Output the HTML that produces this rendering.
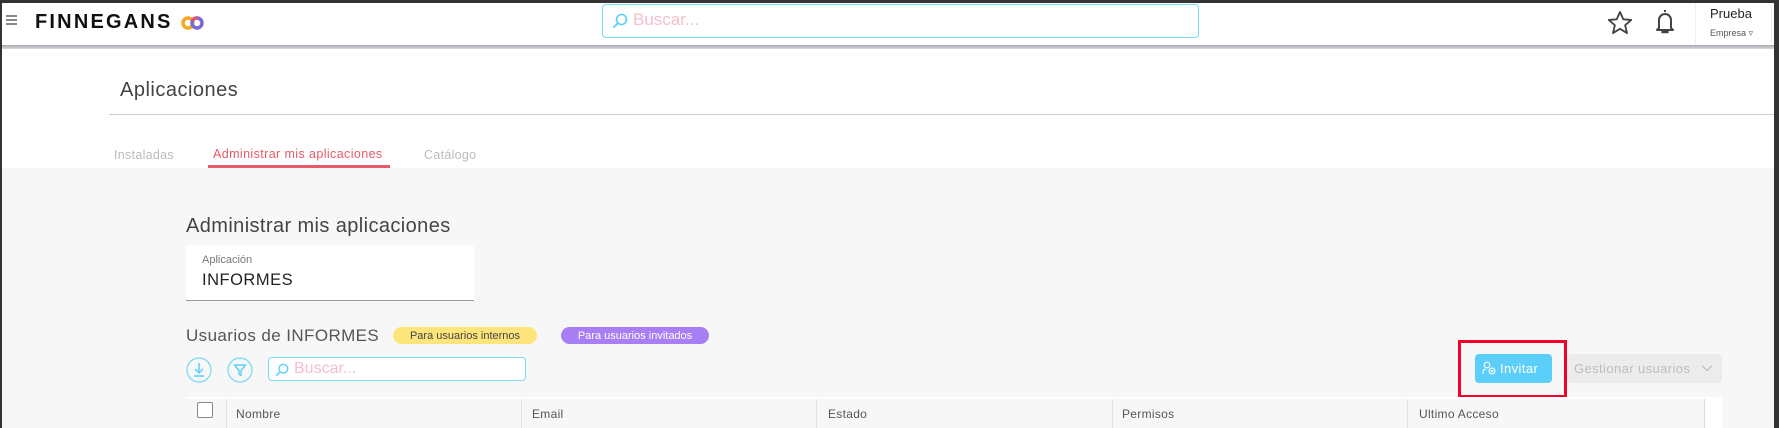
<!DOCTYPE html>
<html><head><meta charset="utf-8"><style>
*{margin:0;padding:0;box-sizing:border-box}
body{width:1779px;height:428px;overflow:hidden;background:#333;font-family:"Liberation Sans",sans-serif;position:relative}
.abs{position:absolute}
#page{position:absolute;left:2px;top:3px;width:1772px;height:425px;background:#fff;overflow:hidden}
</style></head><body>
<div id="page">
<div class="abs" style="left:0;top:0;width:1772px;height:42px;background:#fff"></div>
<div class="abs" style="left:0;top:42px;width:1772px;height:4px;background:linear-gradient(#a4a8ae,#d8dadd)"></div>
<div class="abs" style="left:4px;top:12px;width:11px;height:2px;background:#888"></div>
<div class="abs" style="left:4px;top:16px;width:11px;height:2px;background:#888"></div>
<div class="abs" style="left:4px;top:20px;width:11px;height:2px;background:#888"></div>
<div class="abs" style="left:33px;top:8px;font-size:20px;font-weight:bold;letter-spacing:2.2px;color:#111">FINNEGANS</div>
<svg class="abs" style="left:177px;top:12px" width="28" height="16" viewBox="0 0 28 16"><circle cx="9" cy="8" r="5" fill="none" stroke="#f5a623" stroke-width="3.5"/><circle cx="18" cy="8" r="5" fill="none" stroke="#7b68d6" stroke-width="3.5"/><path d="M13.3 5.5 A5 5 0 0 1 18 3" stroke="#e9546b" stroke-width="3.5" fill="none"/></svg>
<div class="abs" style="left:600px;top:1px;width:597px;height:34px;border:1.5px solid #7dd9f5;border-radius:4px"></div>
<svg class="abs" style="left:610px;top:10px" width="16" height="16" viewBox="0 0 16 16"><circle cx="9.5" cy="6.5" r="5" fill="none" stroke="#5bcefa" stroke-width="1.6"/><path d="M6 10 L1.5 14.5" stroke="#5bcefa" stroke-width="1.8"/></svg>
<div class="abs" style="left:631px;top:7px;font-size:17px;color:#f3bfcb">Buscar...</div>
<svg class="abs" style="left:1604px;top:6px" width="28" height="28" viewBox="0 0 24 24"><path d="M12 2.5l2.8 6.3 6.8.6-5.2 4.5 1.6 6.7L12 17l-6 3.6 1.6-6.7-5.2-4.5 6.8-.6z" fill="none" stroke="#444" stroke-width="1.6" stroke-linejoin="round"/></svg>
<svg class="abs" style="left:1651px;top:4px" width="24" height="30" viewBox="0 0 24 30"><path d="M12 3v2M6 21V13a6 6 0 0 1 12 0v8l2 2H4z" fill="none" stroke="#444" stroke-width="2" stroke-linejoin="round"/><path d="M9.5 25h5" stroke="#444" stroke-width="2.5" stroke-linecap="round"/></svg>
<div class="abs" style="left:1693px;top:0;width:1px;height:42px;background:#eee"></div>
<div class="abs" style="left:1769px;top:0;width:1px;height:42px;background:#eee"></div>
<div class="abs" style="left:1708px;top:3px;font-size:13px;color:#222">Prueba</div>
<div class="abs" style="left:1708px;top:25px;font-size:9px;color:#555">Empresa ▿</div>

<div class="abs" style="left:118px;top:76px;font-size:20px;color:#444;letter-spacing:0.5px">Aplicaciones</div>
<div class="abs" style="left:107px;top:111px;width:1670px;height:1px;background:#ccc"></div>
<div class="abs" style="left:112px;top:145px;font-size:12.5px;color:#bbb;letter-spacing:0.3px">Instaladas</div>
<div class="abs" style="left:211px;top:144px;font-size:12.5px;color:#e85a6a;letter-spacing:0.4px">Administrar mis aplicaciones</div>
<div class="abs" style="left:206px;top:162px;width:182px;height:4px;background:#e85a6a"></div>
<div class="abs" style="left:422px;top:145px;font-size:12.5px;color:#bbb;letter-spacing:0.3px">Catálogo</div>

<div class="abs" style="left:0;top:165px;width:1772px;height:262px;background:#f7f7f7"></div>
<div class="abs" style="left:184px;top:212px;font-size:20px;color:#444;letter-spacing:0.4px">Administrar mis aplicaciones</div>
<div class="abs" style="left:184px;top:242px;width:288px;height:56px;background:#fff;border-radius:3px 3px 0 0;border-bottom:1.5px solid #999"></div>
<div class="abs" style="left:200px;top:251px;font-size:11px;color:#777">Aplicación</div>
<div class="abs" style="left:200px;top:268px;font-size:16.5px;color:#222;letter-spacing:0.5px">INFORMES</div>

<div class="abs" style="left:184px;top:323px;font-size:17px;color:#555;letter-spacing:0.4px">Usuarios de INFORMES</div>
<div class="abs" style="left:391px;top:324px;width:144px;height:17px;border-radius:9px;background:#fde47b;font-size:11px;color:#444;text-align:center;line-height:18px">Para usuarios internos</div>
<div class="abs" style="left:559px;top:324px;width:148px;height:17px;border-radius:9px;background:#a87ef5;font-size:11px;color:#fff;text-align:center;line-height:18px">Para usuarios invitados</div>

<svg class="abs" style="left:184px;top:354px" width="26" height="26" viewBox="0 0 26 26"><circle cx="13" cy="13" r="12" fill="none" stroke="#7dd9f5" stroke-width="1.3"/><path d="M13 6v10M9 12l4 4 4-4M8 19h10" fill="none" stroke="#5bcefa" stroke-width="1.5"/></svg>
<svg class="abs" style="left:225px;top:354px" width="26" height="26" viewBox="0 0 26 26"><circle cx="13" cy="13" r="12" fill="none" stroke="#7dd9f5" stroke-width="1.3"/><path d="M7.5 8h11l-4.5 5.5v5l-2-1.2v-3.8z" fill="none" stroke="#5bcefa" stroke-width="1.4" stroke-linejoin="round"/></svg>
<div class="abs" style="left:266px;top:354px;width:258px;height:24px;border:1.5px solid #7dd9f5;border-radius:4px;background:#fff"></div>
<svg class="abs" style="left:273px;top:360px" width="14" height="14" viewBox="0 0 16 16"><circle cx="9.5" cy="6.5" r="5" fill="none" stroke="#5bcefa" stroke-width="1.6"/><path d="M6 10 L1.5 14.5" stroke="#5bcefa" stroke-width="1.8"/></svg>
<div class="abs" style="left:292px;top:357px;font-size:16px;color:#f3bfcb">Buscar...</div>

<div class="abs" style="left:1456px;top:337px;width:109px;height:58px;border:3px solid #f5002a"></div>
<div class="abs" style="left:1473px;top:351px;width:77px;height:29px;background:#5bcefa;border-radius:4px;color:#fff;font-size:13px;line-height:29px;padding-left:25px;letter-spacing:0.4px">Invitar</div>
<svg class="abs" style="left:1480px;top:358px" width="15" height="15" viewBox="0 0 15 15"><circle cx="5" cy="4" r="2.8" fill="none" stroke="#fff" stroke-width="1.1"/><path d="M1 13v-2a3 3 0 0 1 3-3" fill="none" stroke="#fff" stroke-width="1.1"/><circle cx="10" cy="10" r="3" fill="none" stroke="#fff" stroke-width="1.1"/><path d="M10 8.5v3M8.5 10h3" stroke="#fff" stroke-width="1"/></svg>
<div class="abs" style="left:1565px;top:351px;width:155px;height:29px;background:#ececee;border-radius:4px;color:#bdbdbd;font-size:13px;line-height:29px;padding-left:7px;letter-spacing:0.4px">Gestionar usuarios</div>
<svg class="abs" style="left:1699px;top:361px" width="12" height="8" viewBox="0 0 12 8"><path d="M1 1.5l5 5 5-5" fill="none" stroke="#bdbdbd" stroke-width="1.2"/></svg>

<div class="abs" style="left:184px;top:394px;width:1536px;height:2px;background:#fff"></div>
<div class="abs" style="left:184px;top:396px;width:1536px;height:31px;background:#f7f7f7"></div>
<div class="abs" style="left:195px;top:399px;width:16px;height:16px;border:1px solid #888;border-radius:2px;background:#fff"></div>
<div class="abs" style="left:224px;top:396px;width:1px;height:31px;background:#e2e2e2"></div>
<div class="abs" style="left:519px;top:396px;width:1px;height:31px;background:#e2e2e2"></div>
<div class="abs" style="left:814px;top:396px;width:1px;height:31px;background:#e2e2e2"></div>
<div class="abs" style="left:1110px;top:396px;width:1px;height:31px;background:#e2e2e2"></div>
<div class="abs" style="left:1405px;top:396px;width:1px;height:31px;background:#e2e2e2"></div>
<div class="abs" style="left:1702px;top:396px;width:18px;height:31px;background:#fff;border-left:1px solid #ddd"></div>
<div class="abs" style="left:234px;top:404px;font-size:12px;color:#555;letter-spacing:0.3px">Nombre</div>
<div class="abs" style="left:530px;top:404px;font-size:12px;color:#555;letter-spacing:0.3px">Email</div>
<div class="abs" style="left:826px;top:404px;font-size:12px;color:#555;letter-spacing:0.3px">Estado</div>
<div class="abs" style="left:1120px;top:404px;font-size:12px;color:#555;letter-spacing:0.3px">Permisos</div>
<div class="abs" style="left:1417px;top:404px;font-size:12px;color:#555;letter-spacing:0.3px">Ultimo Acceso</div>
</div>
</body></html>
